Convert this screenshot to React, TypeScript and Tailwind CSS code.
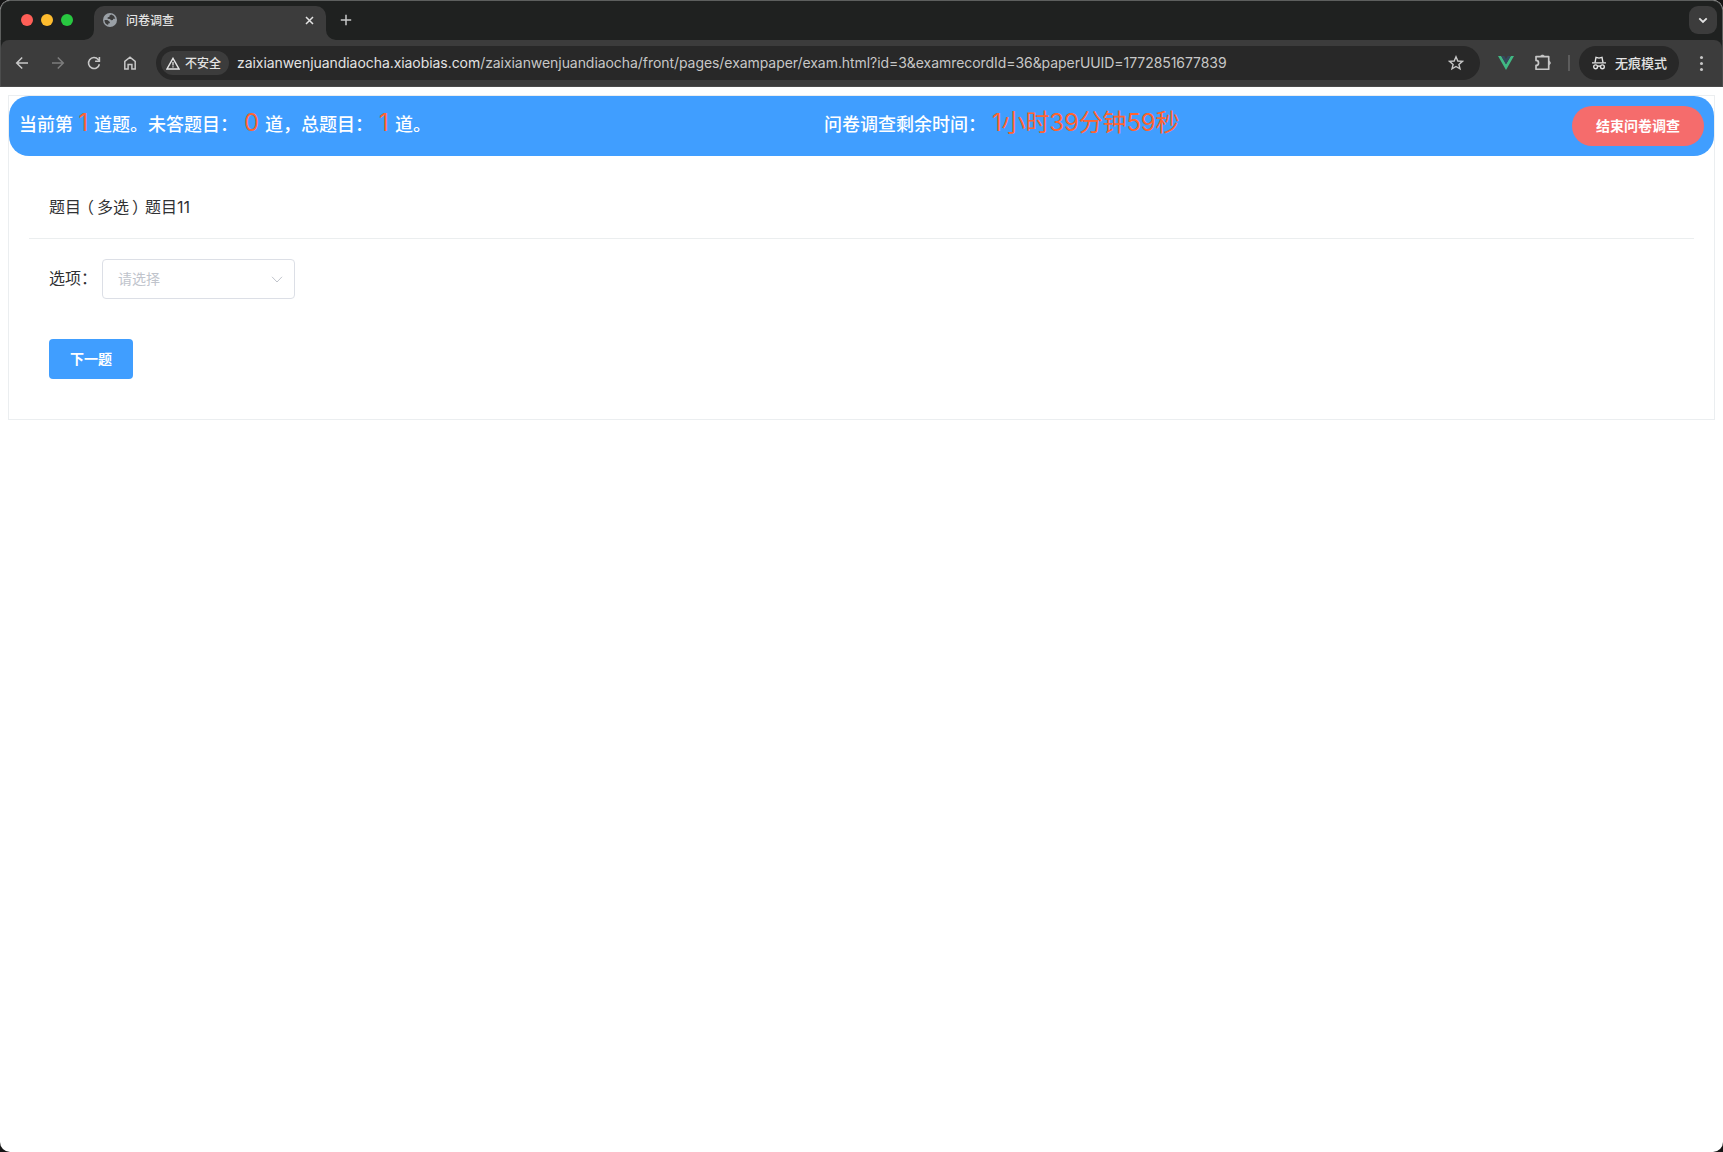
import React from 'react';

function TabStrip() {
  return (
    <div className="flex h-10 items-start rounded-t-[10px] border-x border-t border-[#5d5f5e] bg-[#1f2120] pl-[20px] pr-[5px]">
      <div className="flex gap-2 pt-[13px]">
        <span className="size-3 rounded-full bg-[#ff5f57]" />
        <span className="size-3 rounded-full bg-[#febc2e]" />
        <span className="size-3 rounded-full bg-[#28c840]" />
      </div>

      <svg className="ml-[11px] mt-[29px] size-[10px] text-[#3c3c3c]" viewBox="0 0 10 10">
        <path d="M10 0v10H0A10 10 0 0 0 10 0z" fill="currentColor" />
      </svg>
      <div className="mt-[5px] flex h-[34px] w-[232px] items-center rounded-t-[10px] bg-[#3c3c3c] pb-[6px] pl-[9px] pr-[12px] text-[#e3e3e3]">
        <svg className="size-[14px]" viewBox="0 0 14 14">
          <circle cx="7" cy="7" r="7" fill="#9aa0a6" />
          <path
            d="M8.3 1.6 6.6 2.4 6.3 3.9 4.7 4.2 4.6 5.7 6.9 6 8.2 7.2 9.9 7.1 10.3 5.8 12.3 5.7A5.5 5.5 0 0 0 8.3 1.6zM1.5 6.9 4.4 7.1 6.9 9.1 6.7 10.3 5.3 10.6 5.1 12.1A5.5 5.5 0 0 1 1.5 6.9z"
            fill="#3c3c3c"
          />
        </svg>
        <span className="ml-[9px] flex-1 whitespace-nowrap pt-px text-[12px] font-medium leading-4">问卷调查</span>
        <svg className="size-[9px]" viewBox="0 0 9 9" fill="none" stroke="currentColor" strokeWidth="1.5">
          <path d="M1 1l7 7M8 1L1 8" />
        </svg>
      </div>
      <svg className="mt-[29px] size-[10px] text-[#3c3c3c]" viewBox="0 0 10 10">
        <path d="M0 0v10h10A10 10 0 0 1 0 0z" fill="currentColor" />
      </svg>

      <svg className="ml-[4px] mt-[13px] size-3 text-[#c7c7c7]" viewBox="0 0 12 12" fill="none" stroke="currentColor" strokeWidth="1.5">
        <path d="M6 .8v10.4M.8 6h10.4" />
      </svg>

      <div className="ml-auto mt-[5px] flex size-7 items-center justify-center rounded-[9px] bg-[#3c3c3c] text-[#e3e3e3]">
        <svg className="size-[10px]" viewBox="0 0 10 10" fill="none" stroke="currentColor" strokeWidth="1.8">
          <path d="M1.3 3.3 5 7l3.7-3.7" />
        </svg>
      </div>
    </div>
  );
}

function Toolbar() {
  return (
    <div className="border-x border-[#4c4d4d] bg-[#1f2120]">
      <div className="flex h-[47px] items-center rounded-t-[8px] border-b border-[#4a4a4a] bg-[#3c3c3c] pl-[14px] pr-[13px] text-[#c7c7c7]">
        <svg className="size-[14px]" viewBox="0 0 14 14" fill="none" stroke="currentColor" strokeWidth="1.5">
          <path d="M13 7H2M7.2 1.5 1.7 7l5.5 5.5" />
        </svg>
        <svg className="ml-[22px] size-[14px] text-[#7c7c7c]" viewBox="0 0 14 14" fill="none" stroke="currentColor" strokeWidth="1.5">
          <path d="M1 7h11M6.8 1.5 12.3 7l-5.5 5.5" />
        </svg>
        <svg className="ml-[22px] size-[14px]" viewBox="0 0 14 14" fill="none" stroke="currentColor" strokeWidth="1.6">
          <path d="M12.4 8.2A5.5 5.5 0 1 1 11.2 3.4L12.2 4.5" />
          <path d="M12.4 1v4.3H8.1" />
        </svg>
        <svg className="ml-[22px] size-[14px]" viewBox="0 0 14 14" fill="none" stroke="currentColor" strokeWidth="1.5">
          <path d="M1.8 13V5.4L7 1.2l5.2 4.2V13H8.9V8.4H5.1V13H1.8z" />
        </svg>

        <div className="ml-[19px] flex h-[34px] w-[1324px] items-center rounded-full bg-[#282828] pl-[5px] pr-[16px]">
          <div className="flex h-6 w-[68px] items-center rounded-full bg-[#3c3c3c] pl-[5px] text-[#e3e3e3]">
            <svg className="h-[13px] w-[14px]" viewBox="0 0 14 13" fill="none" stroke="currentColor" strokeWidth="1.4">
              <path d="M7 1.3 13 12H1L7 1.3z" />
              <path d="M7 5v3.4M7 9.2v1.4" strokeWidth="1.3" />
            </svg>
            <span className="ml-[5px] whitespace-nowrap pt-px text-[12px] font-medium leading-4">不安全</span>
          </div>
          <span className="ml-2 flex-1 whitespace-nowrap text-[14px] leading-5 tracking-[-0.06px] text-[#c7c7c7]">
            <span className="text-[#e3e3e3]">zaixianwenjuandiaocha.xiaobias.com</span>
            /zaixianwenjuandiaocha/front/pages/exampaper/exam.html?id=3&amp;examrecordId=36&amp;paperUUID=1772851677839
          </span>
          <svg className="size-4" viewBox="0 0 16 16" fill="none" stroke="currentColor" strokeWidth="1.4">
            <path d="M8 1.8l1.8 4.2 4.6.4-3.5 3 1.1 4.5L8 11.5l-4 2.4 1.1-4.5-3.5-3 4.6-.4L8 1.8z" />
          </svg>
        </div>

        <svg className="ml-[18px] h-[14px] w-4" viewBox="0 0 16 14">
          <path d="M0 0h3.2L8 8.3 12.8 0H16L8 14 0 0z" fill="#41b883" />
          <path d="M3.2 0h3L8 3.1 9.8 0h3L8 8.3 3.2 0z" fill="#35495e" />
        </svg>
        <svg className="ml-5 h-[18px] w-[18px] pb-px" viewBox="0 0 17 16" fill="none" stroke="currentColor" strokeWidth="1.6" strokeLinejoin="round">
          <path d="M1.9 2.4h12v12h-12v-3.6a2.3 2.3 0 0 0 0-4.8V2.4z" />
          <path d="M6.2 2a1.9 1.6 0 0 1 3.6 0zM14.4 6.6a1.6 1.9 0 0 1 0 3.6z" fill="currentColor" strokeWidth="0.6" />
        </svg>
        <span className="ml-4 h-4 w-[2px] bg-[#5c5c5c]" />
        <div className="ml-[9px] flex h-[34px] w-[100px] items-center rounded-full bg-[#282828] pl-[13px] text-[#e3e3e3]">
          <svg className="size-[14px]" viewBox="0 0 14 14" fill="none" stroke="currentColor" strokeWidth="1.4">
            <path d="M0 6.9h14" />
            <path d="M3 6.6 4 1.4l3 .7 3-.7 1 5.2" />
            <circle cx="3.6" cy="10.8" r="1.9" />
            <circle cx="10.4" cy="10.8" r="1.9" />
            <path d="M5.4 10.4q1.6-.9 3.2 0" />
          </svg>
          <span className="ml-[9px] whitespace-nowrap text-[13px] font-medium leading-4">无痕模式</span>
        </div>
        <div className="ml-auto flex w-[16px] flex-col items-center gap-[3px]">
          <span className="size-[3px] rounded-full bg-[#c7c7c7]" />
          <span className="size-[3px] rounded-full bg-[#c7c7c7]" />
          <span className="size-[3px] rounded-full bg-[#c7c7c7]" />
        </div>
      </div>
    </div>
  );
}

function ExamHeader() {
  return (
    <div className="flex h-[60px] items-start rounded-[20px] bg-[#409eff] px-[10px] pt-[10px] text-[18px] font-medium text-white">
      <div className="flex w-[805px] items-baseline whitespace-nowrap leading-[34px]">
        <span>当前第</span>
        <span className="w-[21px] text-center text-[24px] font-normal leading-[34px] text-[#ff6430]">1</span>
        <span>道题。未答题目：</span>
        <span className="w-[27px] text-center text-[24px] font-normal leading-[34px] text-[#ff6430]">0</span>
        <span>道，总题目：</span>
        <span className="w-[22px] text-center text-[24px] font-normal leading-[34px] text-[#ff6430]">1</span>
        <span>道。</span>
      </div>
      <div className="flex items-baseline whitespace-nowrap leading-[34px]">
        <span>问卷调查剩余时间：</span>
        <span className="ml-[6px] text-[24px] font-normal leading-[34px] tracking-[-0.15px] text-[#ff6430]">
          1小时39分钟59秒
        </span>
      </div>
      <button className="ml-auto h-10 w-[132px] rounded-[20px] bg-[#f56c6c] pb-[2px] text-[14px] font-bold">
        结束问卷调查
      </button>
    </div>
  );
}

function App() {
  return (
    <div className="h-[1152px] w-[1723px] overflow-hidden bg-[#151515] font-[Inter,'Noto_Sans_CJK_SC',sans-serif]">
      <div className="flex h-full flex-col overflow-hidden rounded-[10px] bg-white">
        <TabStrip />
        <Toolbar />
        <main className="p-2 text-[#303133]">
          <div className="h-[325px] border border-[#ebeef0] bg-white">
            <ExamHeader />
            <div className="mx-5 flex h-[83px] items-center whitespace-nowrap border-b border-[#ebeeef] px-5 pt-[19px] text-base">
              题目<span className="-ml-[3px] mr-[3px]">（</span>多选<span className="ml-[3px] -mr-[3px]">）</span>题目11
            </div>
            <div className="mx-10 mt-5 flex h-10 items-center">
              <span className="w-[53px] whitespace-nowrap pb-[2px] text-base">选项：</span>
              <div className="flex h-10 w-[193px] items-center justify-between rounded border border-[#dcdfe6] pl-[15px] pr-[11px] text-[14px] text-[#c0c4cc]">
                <span className="pb-[2px]">请选择</span>
                <svg className="h-[7px] w-3" viewBox="0 0 12 7" fill="none" stroke="currentColor" strokeWidth="1">
                  <path d="M1 .8l5 5.2 5-5.2" />
                </svg>
              </div>
            </div>
            <button className="ml-10 mt-10 h-10 w-[84px] rounded bg-[#409eff] pb-[2px] text-[14px] font-bold text-white">
              下一题
            </button>
          </div>
        </main>
      </div>
    </div>
  );
}

export default App;
